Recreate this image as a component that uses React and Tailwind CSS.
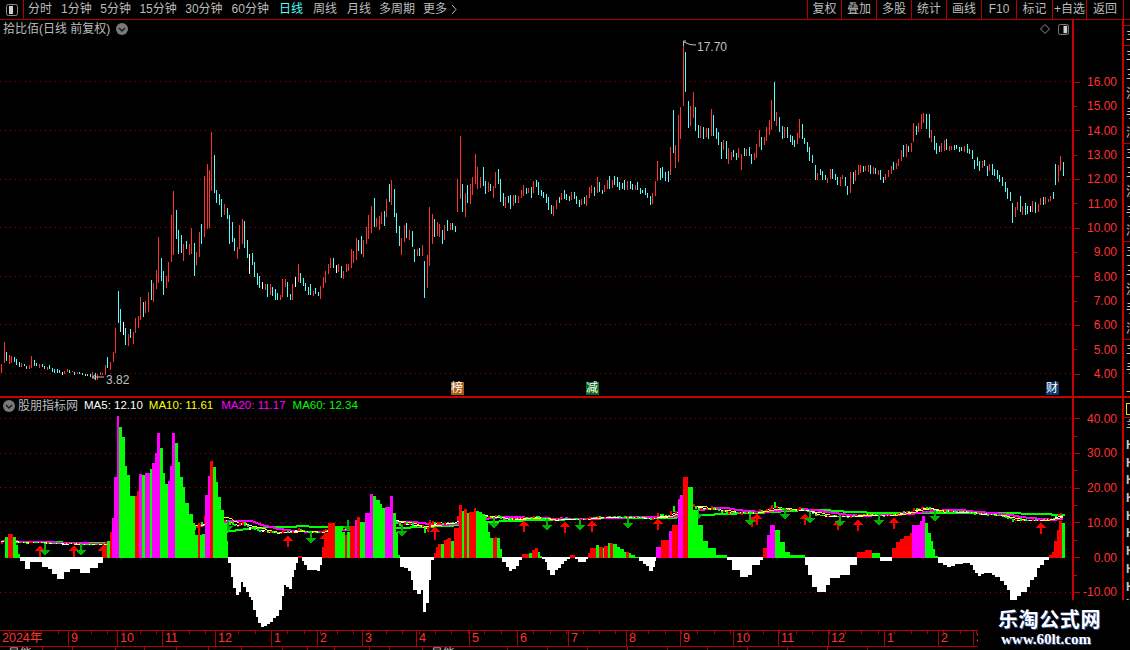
import React from 'react';

const UI_FONT = 'font-["Liberation_Sans","Noto_Sans_CJK_SC",sans-serif]';

// x, colour, top-bottom in screenshot pixels
const CANDLES = `1r364-373 4r342-363 6c352-361 9r355-364 11r356-363 14c357-362 16c359-365 19c362-367 21r363-367 24c364-366
26c366-369 29r365-369 31r356-368 34c360-366 36c363-366 39r364-368 42c364-367 44c366-369 47r367-370 49c365-369 52c368-372 54c369-373
57c369-373 59c370-373 62w372-375 64r371-374 67r369-372 69c370-373 72r371-372 74c372-375 77r372-374 79c372-374 82c373-375 85c374-376
87c374-376 90c374-377 92r372-379 95c373-380 97r374-380 100r372-375 102r373-375 105r365-375 107c357-368 110r362-370 113r352-362 115r328-353
118c291-323 120c309-332 123w322-335 125c328-345 128r334-346 130c329-338 133r332-344 135r318-333 138r316-328 140r297-320 143c302-317
145r301-313 148r292-312 151c280-300 153r283-302 156r270-289 158r237-283 161c258-281 163c271-295 166r276-288 168r262-282 171r215-262
173r191-255 176c210-239 178c230-254 181c235-253 183r244-261 186c241-249 189r244-255 191r228-254 194c243-276 196r252-265 199r232-257
201c224-244 204r176-237 207r164-229 209r170-228 211r132-191 214c155-193 216c190-203 219c194-205 221c199-217 224r204-215 227c208-219
229c215-244 232c222-242 234c238-251 237r247-259 239r225-249 242r219-244 244c221-248 247c240-258 249w254-274 252c253-265 254c262-277
257c273-285 259c276-288 262w282-289 265r284-290 267c284-297 270r284-295 272c287-296 275c289-300 277c293-300 280r295-300 282r279-297
285r279-287 287c282-297 290c294-300 292r284-300 295w277-287 298r264-282 300c273-283 303c278-286 305c283-291 308c287-295 310c284-295
313r291-296 315c288-294 318c292-296 320r286-299 323r277-288 325r271-283 328r264-274 330r258-268 333c258-268 336w265-273 338r264-272
341c266-278 343r271-279 346r264-272 348r264-271 351r249-268 353r251-263 356r238-260 358c240-251 361c236-254 363r240-257 366r227-244
368r215-239 371r206-233 374c198-227 376r218-227 379r216-230 381r212-224 384c211-226 386r199-217 389c184-202 391r180-205 394c189-217
396c213-233 399c226-246 401r238-255 404r225-242 406c223-238 409r230-240 412c231-247 414c249-262 417r249-256 419c248-256 422r245-256
424c261-298 427r255-288 429r207-266 432r214-244 434c219-237 437r222-236 439r224-237 442c230-244 444r225-240 447c220-231 450r223-230
452c223-230 455c226-232 457r179-212 460r136-199 462c184-212 465r193-217 467c185-203 470r184-204 472r177-195 475r154-184 477r167-189
480r177-188 483c167-186 485c181-194 488r182-192 490c184-191 493r186-198 495r172-188 498c169-184 500c179-202 503c193-206 505r197-208
508c196-203 510c195-209 513r195-206 515c195-203 518r196-203 521r190-198 523r185-196 526c188-194 528r188-193 531c187-198 533r181-193
536c180-187 538c182-195 541c190-196 543c192-198 546c194-203 548c197-210 551c205-214 553r206-216 556r200-209 559c197-203 561r193-200
564c190-199 566c194-200 569c196-201 571r192-200 574c192-199 576c196-204 579c200-207 581r199-205 584c197-204 586r195-206 589r187-198
591r185-193 594c187-196 597r177-193 599c182-192 602c190-194 604r185-192 607r180-189 609c176-189 612r180-188 614c176-185 617c177-187
619c182-190 622c183-189 624c180-190 627r181-190 630c181-189 632c184-190 635r185-190 637c182-190 640c188-194 642c190-193 645c188-195
647c193-198 650c196-205 652r193-204 655r181-196 657r161-181 660c168-180 662c167-178 665c172-181 668c171-182 670r147-175 673c110-153
675r145-168 678r115-162 680r107-139 683r42-106 685c52-92 688c101-128 690r106-126 693r92-118 695c107-131 698c125-138 700r126-138
703c127-139 706r128-137 708c128-139 711r109-136 713c115-136 716c128-139 718c132-145 721c142-159 723r140-150 726c141-159 728r148-164
731r152-160 733c150-157 736c153-160 738r148-158 741r154-170 744c148-156 746r149-156 749c147-156 751c154-164 754r153-160 756r144-158
759r130-147 761c137-150 764r137-145 766r127-141 769r120-135 771r100-130 774c82-121 776r112-126 779c117-132 782c126-139 784r127-138
787c127-138 790c135-142 792c136-145 794c140-147 797r133-144 799r119-138 802c124-139 804c138-144 807c142-152 809c147-161 812c155-163
815c165-180 817r173-180 820c169-175 822c171-180 825c175-180 827r178-183 830r169-179 832c169-179 835c174-180 837c177-185 840r177-186
842r175-179 845c177-186 847c186-195 850r172-193 853c172-184 855r170-181 858r165-175 860r165-173 863c166-172 865r166-171 868r165-172
870c165-174 873r167-174 875c168-174 878r170-175 880c170-180 883c177-183 885r174-180 888r170-177 891r166-174 893c162-170 896r163-169
898r159-166 901r150-161 903c145-157 906r144-157 908c146-152 911r143-152 913r123-142 916c126-135 918r123-132 921r114-129 923r113-123
926c114-129 929c114-138 931r130-142 934c136-150 936c143-154 939c146-152 941r143-152 944r140-151 946c139-150 949r146-151 951r146-150
954c145-150 956c145-149 959c147-152 961c147-151 964r146-152 967c144-153 969c149-154 972c150-159 974c160-169 977c157-166 979c161-171
982r161-168 984c160-166 987c166-176 989r164-171 992c164-175 994c169-176 997c170-179 999c175-182 1002c177-186 1005c182-192 1007c188-199
1010c192-201 1012c203-223 1015r207-217 1017r202-210 1020c196-212 1022r206-215 1025c203-215 1027c206-214 1030w206-212 1032r201-212
1035c202-213 1038r204-212 1040r198-205 1043c197-205 1045r197-204 1048r199-202 1050r196-201 1053c192-199 1055c164-185 1058r165-182
1060r156-171 1063c162-176`;

// x where the column starts, colour, y of its far end
const HIST = `5g537 8r534 13g537 16g545 18g554 20w561 25w569 30w562 42w567 48w569 52w574 57w579 64w572 70w569 80w573 90w568 98w563
103r545 107g541 110r532 112m518 114m477 117m416 119g427 122g437 125g466 127g475 130g496 135r496 137r491 139m474 142g475 145m473 150g469
152m463 155m453 157m433 160g448 163g473 165g484 168m481 170m466 172m433 175g443 178g462 180g477 183g487 185g503 189g514 193g523 195g535
198r523 200g535 205m495 208m476 210r461 213g467 216g482 218g497 221g510 224g523 227g541 228w563 231w577 233w588 236w595 239w592 241w582
243w587 246w592 249w597 251w600 253w610 256w617 258w623 261w627 264w626 267w624 270w622 273w618 276w616 279w610 282w596 284w585 286w587
289w589 292w577 294w570 296w563 298r556 302w561 304w565 307w570 317w571 320w565 322r547 324r533 328r523 335g526 340g527 342g532 345r535
347g532 350r526 355m520 357r517 360g522 365m513 370m494 373g496 376g500 380g504 382g508 385m507 390m496 393g513 396g532 398g555
400w567 404w568 408w571 411w580 413w590 417w594 421w590 423w612 426w603 429w580 431w560 434r553 436r547 438r544 441g544 444r540 446r539
448r538 451g541 454r528 459r505 462g511 464r509 467g513 469r512 474r508 476g511 479g512 482g514 484g517 486g523 488g532 490g538 493r538
495r537 497g538 500g549 502w562 506w567 509w571 512w569 516w566 519w560 522r554 529g553 532r550 535r548 538g552 540g556 542w559 545w562
547w570 550w575 555w570 558w568 561w564 564w561 567w559 570r555 575w559 578w562 586w559 588r553 590r548 596g545 599r547 603g548 604r546
608g543 610r543 613g544 617g547 620g549 624g552 626r552 629g553 631g555 635g557 639w561 643w564 646w566 649w571 653w567 655w561 656m547
661r540 669m531 672r525 678m499 680m495 683r477 688g487 693g510 698g525 703g541 708g548 716g555 727w560 732w570 740w577 748w575 752w565
760w560 763r548 767m535 770m525 775g530 780g542 785g552 790g555 805w565 808w575 812w587 817w592 826w585 830w578 840w575 850w565 857r552
865r550 872g553 880w561 892r548 896r542 900r539 904r536 910r533 912m525 920m521 922m516 925g523 928g533 931g541 933g549 935g556 938w563
943w565 947w567 951w566 955w564 963w563 970w565 973w570 975w573 978w576 981w574 984w573 992w575 995w577 1000w581 1004w585 1007w590
1010w620 1017w596 1021w592 1027w587 1030w580 1034w577 1037w568 1040w565 1044w560 1049r555 1052r552 1054r541 1057r530 1059r521 1062g523 1065g558`;

const UP_ARROWS = [[40, 545, 557], [74, 545, 557], [103, 545, 557], [288, 535, 547], [325, 533, 545], [435, 526, 540], [524, 520, 532], [565, 521, 533], [592, 520, 532], [658, 518, 530], [752, 516, 527], [757, 513, 525], [805, 513, 525], [838, 519, 530], [858, 519, 531], [894, 517, 529], [1041, 522, 534]];
const DOWN_ARROWS = [[45, 544, 556], [81, 544, 556], [228, 520, 532], [311, 532, 544], [348, 520, 532], [402, 525, 537], [494, 517, 529], [547, 519, 531], [580, 519, 531], [628, 517, 529], [698, 510, 520], [750, 514, 526], [785, 508, 520], [810, 512, 524], [840, 515, 527], [879, 514, 526], [935, 510, 522]];

const COLORS = { r: '#ff3232', c: '#54fcfc', w: '#ffffff' };
const HIST_COLORS = { r: '#ff0000', g: '#00ff00', m: '#ff00ff', w: '#ffffff' };

const candles = [...CANDLES.matchAll(/(\d+)([rcw])(\d+)-(\d+)/g)].map((m) => ({
  x: +m[1],
  kind: m[2],
  top: +m[3],
  bottom: +m[4],
}));

const hist = [...HIST.matchAll(/(\d+)([rgmw])(\d+)/g)].map((m) => ({ x: +m[1], kind: m[2], y: +m[3] }));

// closes come from the candles, the lower panel plots them on its own scale
const priceAt = (y) => 16 - (y - 81) / 24.33;
const closes = candles.map((c) => priceAt(c.kind === 'r' ? c.top : c.bottom));
const lowerY = (price) => 557.5 - 3.47 * price;

const movingAverage = (period) =>
  closes.map((_, i) => {
    const start = Math.max(0, i - period + 1);
    const slice = closes.slice(start, i + 1);
    return slice.reduce((a, b) => a + b, 0) / slice.length;
  });

const ma5 = movingAverage(5);
const ma10 = movingAverage(10);
const ma20 = movingAverage(20);
const ma60 = movingAverage(60);

const toPoints = (series) => series.map((v, i) => `${candles[i].x},${Math.round(lowerY(v))}`).join(' ');

const TIME_CELLS = [
  ['2024年', 68], ['9', 49], ['10', 45], ['11', 53], ['12', 56], ['1', 46], ['2', 45], ['3', 54], ['4', 53], ['5', 48],
  ['6', 51], ['7', 58], ['8', 54], ['9', 53], ['10', 45], ['11', 50], ['12', 56], ['1', 54], ['2', 35], ['3', 5],
];
const FOOT_CELLS = [43, 30, 43, 29, 32, 32, 33, 41, 25, 27, 35, 20, 33, 85, 40, 40, 40, 40, 40, 40, 40, 40, 40];

const TOOL_ITEMS = [
  ['分时', ''],
  ['1分钟', 'ml-[9px]'],
  ['5分钟', 'ml-[8.5px]'],
  ['15分钟', 'ml-[8.5px]'],
  ['30分钟', 'ml-[8.5px]'],
  ['60分钟', 'ml-[9px]'],
  ['日线', 'ml-[10px] text-[#54fcfc]'],
  ['周线', 'ml-[10px]'],
  ['月线', 'ml-[10px]'],
  ['多周期', 'ml-[8px]'],
  ['更多', 'ml-[8px]'],
];
const TOOL_BUTTONS = [['复权', 'w-[34px]'], ['叠加', 'w-[35px]'], ['多股', 'w-[35px]'], ['统计', 'w-[35px]'], ['画线', 'w-[35px]'], ['F10', 'w-[35px]'], ['标记', 'w-[36px]'], ['+自选', 'w-[34px]'], ['返回', 'w-[37px]']];

const UPPER_TICKS = ['16.00', '15.00', '14.00', '13.00', '12.00', '11.00', '10.00', '9.00', '8.00', '7.00', '6.00', '5.00', '4.00'];
const LOWER_TICKS = ['40.00', null, '30.00', null, '20.00', null, '10.00', null, '0.00', null, '-10.00'];

const PanelIcon = ({ size = 12, left }) => (
  <svg width={size} height={size} viewBox="0 0 12 12" className="block">
    <rect x="0.5" y="0.5" width="11" height="11" rx="2" fill="none" stroke="#8c8c8c" />
    <rect x={left ? 3 : 6} y="2" width="4" height="8" fill="#d0d0d0" />
  </svg>
);

const ChevronDot = () => (
  <svg width="12" height="12" viewBox="0 0 12 12" className="block shrink-0">
    <circle cx="6" cy="6" r="6" fill="#7a7a7a" />
    <path d="M3 5l3 3 3-3" fill="none" stroke="#1c1c1c" strokeWidth="1.5" />
  </svg>
);

const Arrow = ({ x, top, bottom, up }) => {
  const color = up ? '#ff0000' : '#00b400';
  if (up) {
    return (
      <g fill={color}>
        <path d={`M${x} ${top}L${x + 5} ${top + 6}H${x - 5}Z`} />
        <rect x={x - 1} y={top + 6} width="2" height={bottom - top - 6} />
      </g>
    );
  }
  return (
    <g fill={color}>
      <path d={`M${x} ${bottom}L${x + 5} ${bottom - 6}H${x - 5}Z`} />
      <rect x={x - 1} y={top} width="2" height={bottom - top - 6} />
    </g>
  );
};

const GridLine = ({ y }) => <line x1="0" x2="1072" y1={y + 0.5} y2={y + 0.5} stroke="#a80000" strokeDasharray="1 4" />;

const PriceChart = () => (
  <svg viewBox="0 20 1072 376" className="absolute inset-0 w-[1072px] h-[376px]" shapeRendering="crispEdges">
    {[81, 130, 179, 227, 276, 324, 373].map((y) => <GridLine key={y} y={y} />)}
    {candles.map((c) => (
      <rect key={c.x} x={c.x} y={c.top} width="1" height={c.bottom - c.top} fill={COLORS[c.kind]} />
    ))}
    <path d="M683.5 46V41H686M684 42L690 44.5L696 45" fill="none" stroke="#c0c0c0" shapeRendering="auto" />
    <path d="M92.5 377H104M92.5 377L96 374M92.5 377L96 380" fill="none" stroke="#c0c0c0" shapeRendering="auto" />
  </svg>
);

const IndicatorChart = () => (
  <svg viewBox="0 398 1072 232" className="absolute inset-0 w-[1072px] h-[232px]" shapeRendering="crispEdges">
    {[418, 453, 487, 522, 592].map((y) => <GridLine key={y} y={y} />)}
    <polyline points={toPoints(ma60)} fill="none" stroke="#00ff00" strokeWidth="2" />
    <polyline points={toPoints(ma20)} fill="none" stroke="#ff00ff" strokeWidth="2" />
    <polyline points={toPoints(ma10)} fill="none" stroke="#ffff00" strokeWidth="1" />
    <polyline points={toPoints(ma5)} fill="none" stroke="#ffffff" strokeWidth="1" />
    {/* the same candles again, squeezed onto this panel's scale */}
    {candles.map((c) => {
      const top = lowerY(priceAt(c.top));
      const bottom = lowerY(priceAt(c.bottom));
      return (
        <rect
          key={c.x}
          x={c.x}
          y={top}
          width="2"
          height={Math.max(bottom - top, 1)}
          fill={c.kind === 'r' ? '#ff0000' : c.kind === 'w' ? '#ffffff' : '#00ff00'}
        />
      );
    })}
    {UP_ARROWS.map(([x, top, bottom]) => <Arrow key={x} x={x} top={top} bottom={bottom} up />)}
    {DOWN_ARROWS.map(([x, top, bottom]) => <Arrow key={x} x={x} top={top} bottom={bottom} />)}
    {hist.slice(0, -1).map((b, i) => {
      const width = hist[i + 1].x - b.x;
      const up = b.kind !== 'w';
      return (
        <rect
          key={b.x}
          x={b.x}
          y={up ? b.y : 557}
          width={width}
          height={up ? 558 - b.y : b.y - 557}
          fill={HIST_COLORS[b.kind]}
        />
      );
    })}
  </svg>
);

const Toolbar = () => (
  <div className="h-5 shrink-0 flex items-stretch border-b border-[#b00000] text-[12px] leading-[19px] text-[#bcbcbc]">
    <div className="w-6 shrink-0 flex items-center justify-center border-r border-[#b00000]">
      <PanelIcon left />
    </div>
    <div className="flex items-center pl-1">
      {TOOL_ITEMS.map(([item, spacing]) => (
        <span key={item} className={spacing}>{item}</span>
      ))}
      <svg width="6" height="11" viewBox="0 0 6 11" className="ml-[4px]">
        <path d="M1 1l4 4.5-4 4.5" fill="none" stroke="#bcbcbc" />
      </svg>
    </div>
    <div className="ml-auto flex items-stretch">
      {TOOL_BUTTONS.map(([label, width]) => (
        <div key={label} className={`${width} flex items-center justify-center border-l border-[#b00000] whitespace-nowrap`}>
          {label}
        </div>
      ))}
      <div className="w-[7px] border-l border-[#b00000]" />
    </div>
  </div>
);

const TimeAxis = () => (
  <div className="relative h-[17px] shrink-0 flex border-y border-[#b00000] text-[12.5px] leading-[15px] text-[#ff3232]">
    <svg viewBox="0 0 1072 15" className="absolute inset-0 w-[1072px] h-[15px]" shapeRendering="crispEdges">
      {Array.from({ length: 65 }, (_, i) => (
        <line key={i} x1={9 + i * 16.4} x2={9 + i * 16.4} y1="0" y2="3" stroke="#b00000" />
      ))}
    </svg>
    {TIME_CELLS.map(([label, width], i) => (
      <div key={i} style={{ width }} className={`shrink-0 pl-[2px] overflow-hidden whitespace-nowrap ${i > 0 ? 'border-l border-[#b00000]' : ''}`}>
        {label}
      </div>
    ))}
  </div>
);

const FootRow = () => (
  <div className="h-[3px] shrink-0 flex overflow-hidden text-[12px] leading-[14px] text-[#c0c0c0]">
    {FOOT_CELLS.map((width, i) => (
      <div key={i} style={{ width }} className="shrink-0 pl-2 border-r border-[#b00000] whitespace-nowrap">
        {i === 0 || i === 13 ? '量能' : ''}
      </div>
    ))}
  </div>
);

const SliverRow = ({ label, tall }) => (
  <div className={`${tall ? 'h-[19.4px]' : 'h-[17.7px]'} pl-[2px] whitespace-nowrap leading-[18px]`}>{label}</div>
);

const SliverGroup = ({ labels }) => (
  <div className="border-t border-[#b00000]">
    {labels.map((label, i) => <SliverRow key={i} label={label} tall />)}
  </div>
);

// only the left edge of the neighbouring quote column shows at this window width
const Sliver = () => (
  <div className="w-[6px] shrink-0 flex flex-col overflow-hidden text-[12px] text-[#c8c8c8]">
    <div className="h-[376px] pt-[5px] overflow-hidden">
      <SliverGroup labels={['主']} />
      <SliverGroup labels={['主', '三', '注', '手', '涉']} />
      <SliverGroup labels={['主', '三', '注', '手', '涉']} />
      <SliverGroup labels={['主', '三', '注', '手', '涉']} />
      <SliverGroup labels={['主', '手', '上']} />
    </div>
    <div className="h-[2px] bg-[#c80000]" />
    <div className="flex-1 overflow-hidden">
      <div className="mt-[5px] h-[12px] w-[8px] ml-[2px] border border-[#e0e000]" />
      <div className="mt-[2px] border-t border-[#b00000] h-[19px] pl-[2px] leading-[16px]">羊</div>
      <div className="font-bold">
        {Array.from({ length: 11 }, (_, i) => <SliverRow key={i} label="H" />)}
      </div>
    </div>
  </div>
);

const AxisTick = ({ label, long }) => (
  <>
    <div className={`${long ? 'w-[6px]' : 'w-[3px]'} h-px bg-[#c80000] shrink-0`} />
    {label && <span className="ml-auto pr-[5px]">{label}</span>}
  </>
);

const PriceAxis = () => (
  <div className="h-[376px] pt-[50px] text-[12px] text-[#ff3232]">
    {UPPER_TICKS.map((label, i) => (
      <div key={label} className="h-[24.33px] flex items-center">
        <AxisTick label={label} long={i % 2 === 0} />
      </div>
    ))}
  </div>
);

const IndicatorAxis = () => (
  <div className="flex-1 pt-[12px] text-[12px] text-[#ff3232]">
    {LOWER_TICKS.map((label, i) => (
      <div key={i} className="h-[17.375px] flex items-center">
        <AxisTick label={label} long={label !== null} />
      </div>
    ))}
  </div>
);

const Watermark = () => (
  <div className="absolute left-[978px] top-[600px] w-[152px] h-[50px] bg-black pl-[20px] pt-[7px] text-white">
    <div className='font-["Noto_Sans_CJK_SC",sans-serif] font-bold text-[20px] leading-[24px] tracking-[0.6px] [text-shadow:1px_1px_0_#2a4fa0]'>
      乐淘公式网
    </div>
    <div className='font-["Liberation_Serif",serif] font-bold text-[15px] leading-[16px] pl-[3px] [text-shadow:1px_1px_0_#2a4fa0]'>
      www.60lt.com
    </div>
  </div>
);

const App = () => (
  <div className={`relative w-[1130px] h-[650px] bg-black overflow-hidden flex flex-col ${UI_FONT}`}>
    <Toolbar />
    <div className="flex-1 flex min-h-0">
      <div className="w-[1072px] shrink-0 flex flex-col">
        <div className="relative h-[376px] shrink-0">
          <PriceChart />
          <div className="relative flex items-center h-[18px] pl-[3px] text-[12px] text-[#bcbcbc]">
            <span>拾比佰(日线 前复权)</span>
            <span className="ml-[6px]"><ChevronDot /></span>
            <span className="ml-auto flex items-center gap-[8px] pr-[3px]">
              <svg width="10" height="10" viewBox="0 0 10 10">
                <path d="M5 .5L9.5 5 5 9.5.5 5Z" fill="none" stroke="#8c8c8c" />
              </svg>
              <PanelIcon size={11} />
            </span>
          </div>
          <span className="absolute left-[697px] top-[18px] text-[12px] text-[#c0c0c0]">17.70</span>
          <span className="absolute left-[106px] top-[351px] text-[12px] text-[#c0c0c0]">3.82</span>
          <span className="absolute left-[451px] top-[362px] w-[13px] h-[13px] bg-[#a85a10] text-[12px] leading-[13px] text-white">榜</span>
          <span className="absolute left-[586px] top-[362px] w-[13px] h-[13px] bg-[#0a6a20] text-[12px] leading-[13px] text-white">减</span>
          <span className="absolute left-[1046px] top-[362px] w-[13px] h-[13px] bg-[#0a3a70] text-[12px] leading-[13px] text-white">财</span>
        </div>
        <div className="h-[2px] shrink-0 bg-[#c80000]" />
        <div className="relative h-[232px] shrink-0">
          <IndicatorChart />
          <div className="relative flex items-center h-[15px] pl-[3px] text-[11.5px]">
            <ChevronDot />
            <span className="ml-[3px] text-[12px] text-[#bcbcbc]">股朋指标网</span>
            <span className="ml-[6px] text-white">MA5: 12.10</span>
            <span className="ml-[6px] text-[#ffff00]">MA10: 11.61</span>
            <span className="ml-[8px] text-[#ff00ff]">MA20: 11.17</span>
            <span className="ml-[7px] text-[#00ff00]">MA60: 12.34</span>
          </div>
        </div>
        <TimeAxis />
        <FootRow />
      </div>
      <div className="w-[52px] shrink-0 flex flex-col border-x-2 border-[#c80000]">
        <PriceAxis />
        <div className="h-[2px] shrink-0 bg-[#c80000]" />
        <IndicatorAxis />
      </div>
      <Sliver />
    </div>
    <Watermark />
  </div>
);

export default App;
